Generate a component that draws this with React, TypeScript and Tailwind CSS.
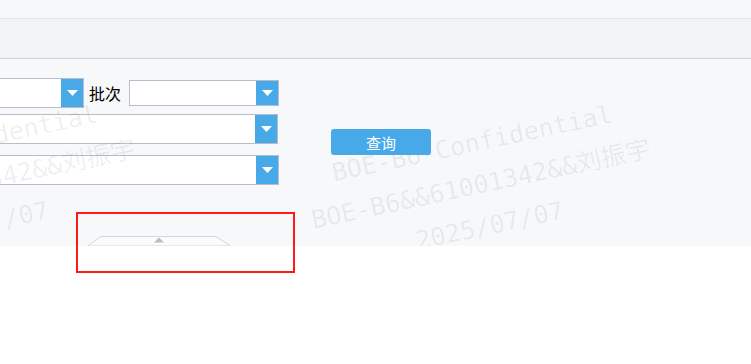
import React from "react";

const font = { fontFamily: '"Noto Sans CJK SC", "Noto Sans", sans-serif' };

function Select({ className }: { className: string }) {
  return (
    <div className={`flex border border-[#b9bccb] bg-white ${className}`}>
      <div className="flex-1" />
      <div className="flex w-[22px] items-center justify-center bg-[#48a9e9]">
        <svg width="11" height="6" viewBox="0 0 11 6">
          <polygon points="0,0 11,0 5.5,6" fill="#ffffff" />
        </svg>
      </div>
    </div>
  );
}

function Watermark({ left }: { left: string }) {
  return (
    <div
      className={`pointer-events-none absolute top-[126px] ${left} -translate-x-1/2 -translate-y-1/2 -rotate-[12deg] whitespace-nowrap text-center text-[25px] leading-[42px] text-black/[0.07]`}
      style={{ fontFamily: '"DejaVu Sans Mono", "Noto Sans CJK SC", monospace' }}
    >
      <div>BOE-B6-Confidential</div>
      <div>BOE-B6&amp;&amp;61001342&amp;&amp;刘振宇</div>
      <div>2025/07/07</div>
    </div>
  );
}

export default function App() {
  return (
    <div className="relative h-[364px] w-[751px] overflow-hidden bg-white" style={font}>
      {/* top strips */}
      <div className="h-[19px] border-b border-[#e6e7eb] bg-[#f7f8fa]" />
      <div className="h-[40px] border-b border-[#d0d2d8] bg-[#f2f3f7]" />

      {/* query panel */}
      <div className="relative flex h-[187px] flex-col overflow-hidden bg-[#f7f8fa]">
        <div className="flex pt-[19px]">
          <div className="-ml-[120px] flex w-[399px] flex-col">
            <div className="flex items-center">
              <Select className="h-[30px] w-[204px]" />
              <span className="ml-[5px] mr-[8px] w-[32px] text-[16px] leading-none text-black">批次</span>
              <Select className="h-[26px] w-[150px]" />
            </div>
            <Select className="mt-[6px] h-[30px] w-[398px]" />
            <Select className="mt-[11px] h-[30px] w-[399px]" />
          </div>
          <button className="relative z-20 ml-[52px] mt-[51px] h-[26px] w-[100px] rounded-[3px] bg-[#48a9e9] text-[15px] leading-none text-white">
            查询
          </button>
        </div>

        <div className="mt-auto ml-[87px]">
          <svg width="144" height="10" viewBox="0 0 144 10" className="block">
            <polygon points="0.5,10 14,0.5 129,0.5 143.5,10" fill="#fbfbfc" stroke="#d6d6d8" />
            <polygon points="67,6.5 72,1.5 77,6.5" fill="#bdbdc0" />
          </svg>
        </div>

        <Watermark left="left-[-34px]" />
        <Watermark left="left-[481px]" />
      </div>

      {/* highlight box */}
      <div className="pointer-events-none absolute left-[76px] top-[212px] h-[61px] w-[219px] border-2 border-[#ff1a1a]" />
    </div>
  );
}
